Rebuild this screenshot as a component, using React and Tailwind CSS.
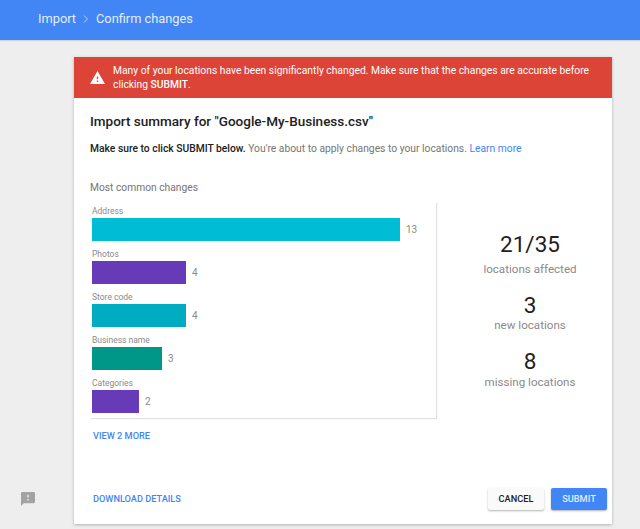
const bars = [
  { label: "Address", width: "w-[308px]", color: "bg-[#00bcd4]", value: 13 },
  { label: "Photos", width: "w-[94px]", color: "bg-[#673ab7]", value: 4 },
  { label: "Store code", width: "w-[94px]", color: "bg-[#00acc1]", value: 4 },
  { label: "Business name", width: "w-[70px]", color: "bg-[#009688]", value: 3 },
  { label: "Categories", width: "w-[47px]", color: "bg-[#673ab7]", value: 2 },
];

function Stat({ number, label, className, numberClass }) {
  return (
    <div className={`flex flex-col items-center ${className}`}>
      <p className={`text-[22.5px] text-[#212121] ${numberClass}`}>{number}</p>
      <p className="text-[11.6px] leading-[16px] text-[#8a8a8a]">{label}</p>
    </div>
  );
}

function WarningIcon() {
  return (
    <svg width="15" height="13" viewBox="0 0 22 19" className="shrink-0">
      <path d="M0 19h22L11 0 0 19zm12-3h-2v-2h2v2zm0-4h-2V8h2v4z" fill="#fff" />
    </svg>
  );
}

function FeedbackIcon() {
  return (
    <svg width="14" height="14" viewBox="2 2 20 20">
      <path
        d="M20 2H4c-1.1 0-2 .9-2 2v18l4-4h14c1.1 0 2-.9 2-2V4c0-1.1-.9-2-2-2zm-7 12h-2v-2h2v2zm0-4h-2V6h2v4z"
        fill="#a3a3a3"
      />
    </svg>
  );
}

export default function App() {
  return (
    <div className="h-[529px] w-[640px] overflow-hidden bg-[#eeeeee] font-['Roboto',sans-serif]">
      <header className="flex h-10 items-center bg-[#4285f4] pb-[3px] pl-[38px] text-[12.8px] text-[#e3edfd] shadow-[0_1px_1px_rgba(0,0,0,0.1)]">
        <span>Import</span>
        <svg width="6" height="8" viewBox="0 0 6 8" fill="none" className="mx-[7px]">
          <path d="M1 0.5 L4.5 4 L1 7.5" stroke="#b7d0fb" strokeWidth="1" />
        </svg>
        <span>Confirm changes</span>
      </header>

      <div className="flex">
        <aside className="flex w-[74px] items-end pb-[18px] pl-[21px]">
          <FeedbackIcon />
        </aside>

        <main className="mt-[17px] flex h-[467px] w-[538px] flex-col bg-white shadow-[0_1px_3px_rgba(0,0,0,0.25)]">
          <div className="flex h-[41px] items-center gap-[8px] bg-[#db4437] pl-[16px] text-white">
            <WarningIcon />
            <p className="w-[490px] text-[10.3px] leading-[14px]">
              Many of your locations have been significantly changed. Make sure that the changes are accurate before clicking{" "}
              <b className="font-medium">SUBMIT</b>.
            </p>
          </div>

          <div className="flex flex-1 flex-col pl-[16px]">
            <h1 className="mt-[14px] text-[13.5px] leading-[18px] font-medium text-[#212121]">
              Import summary for "Google-My-Business.csv"
            </h1>
            <p className="mt-[12px] text-[10.3px] leading-[14px] text-[#757575]">
              <b className="font-medium text-[#212121]">Make sure to click SUBMIT below.</b> You're about to apply changes to your locations.{" "}
              <span className="text-[#4285f4]">Learn more</span>
            </p>
            <p className="mt-[25px] text-[10.25px] leading-[14px] text-[#757575]">Most common changes</p>

            <div className="mt-[7px] flex">
              <div className="flex h-[216px] w-[346px] flex-col gap-[3px] pl-[2px] shadow-[1px_1px_1px_rgba(0,0,0,0.12)]">
                {bars.map((bar) => (
                  <div key={bar.label} className="h-[40px]">
                    <p className="mt-[3px] mb-[1px] text-[8.5px] leading-[12px] text-[#8a8a8a]">{bar.label}</p>
                    <div className="flex items-center gap-[6px]">
                      <div className={`h-[23px] ${bar.width} ${bar.color}`} />
                      <span className="text-[10px] text-[#8a8a8a]">{bar.value}</span>
                    </div>
                  </div>
                ))}
              </div>

              <div className="flex flex-1 flex-col pt-[28px] pl-[12px]">
                <Stat number="21/35" label="locations affected" numberClass="mb-[3px] leading-[28px]" />
                <Stat number="3" label="new locations" className="mt-[16px]" numberClass="leading-[24px]" />
                <Stat number="8" label="missing locations" className="mt-[15px]" numberClass="leading-[26px]" />
              </div>
            </div>

            <p className="mt-[12px] pl-[3px] text-[9.2px] leading-[12px] font-medium text-[#4285f4]">VIEW 2 MORE</p>

            <div className="mt-auto flex items-center justify-between pr-[5px] pb-[14px] pl-[3px]">
              <span className="text-[9.2px] font-medium text-[#4285f4]">DOWNLOAD DETAILS</span>
              <div className="flex gap-[7px]">
                <button className="h-[22px] w-[56px] rounded-[2px] bg-[#fafafa] text-[9.2px] font-medium text-[#212121] shadow-[0_1px_2px_rgba(0,0,0,0.3)]">
                  CANCEL
                </button>
                <button className="h-[22px] w-[56px] rounded-[2px] bg-[#4285f4] text-[9.2px] font-medium text-[#e3edfd] shadow-[0_1px_2px_rgba(0,0,0,0.3)]">
                  SUBMIT
                </button>
              </div>
            </div>
          </div>
        </main>
      </div>
    </div>
  );
}
